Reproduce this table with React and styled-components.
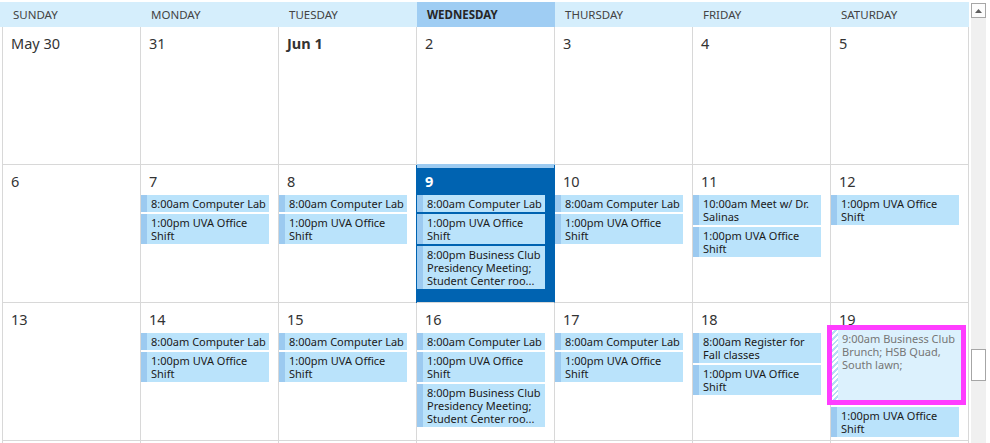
import React from "react";
import styled, { createGlobalStyle } from "styled-components";

const GlobalStyle = createGlobalStyle`
  html, body {
    margin: 0;
    padding: 0;
    background: #fff;
  }
  body {
    font-family: "Noto Sans", "Open Sans", sans-serif;
    color: #333;
  }
`;

const Page = styled.div`
  width: 990px;
  height: 443px;
  overflow: hidden;
  display: flex;
  padding-top: 2px;
  box-sizing: border-box;
`;

const Pane = styled.div`
  width: 969px;
  flex-shrink: 0;
`;

const HeaderBar = styled.div`
  display: grid;
  grid-template-columns: repeat(7, 138px);
  height: 25px;
  padding-left: 3px;
  background: #d5eefc;
`;

const HeaderCell = styled.div`
  display: flex;
  align-items: center;
  padding-left: 10px;
  font-size: 11.5px;
  text-transform: uppercase;
  color: ${(p) => (p.$today ? "#262626" : "#444")};
  font-weight: ${(p) => (p.$today ? 700 : 400)};
  background: ${(p) => (p.$today ? "#9fcdf3" : "transparent")};
`;

const Grid = styled.div`
  margin-left: 2px;
  border-left: 1px solid #d8d8d8;
  display: grid;
  grid-template-columns: repeat(7, 138px);
  grid-auto-rows: 138px;
`;

const Cell = styled.div`
  box-sizing: border-box;
  min-width: 0;
  display: flex;
  flex-direction: column;
  border-right: 1px solid ${(p) => (p.$today ? "#0063b1" : "#d8d8d8")};
  border-bottom: 1px solid #d8d8d8;
  background: ${(p) => (p.$today ? "#0063b1" : "#fff")};
  box-shadow: ${(p) =>
    p.$today
      ? "-1px 0 0 #0063b1, 0 -1px 0 #9dcbf1, inset 0 3px 0 #9dcbf1"
      : "none"};
`;

const DayNum = styled.div`
  flex-shrink: 0;
  height: 30px;
  box-sizing: border-box;
  padding: 2px 0 0 8px;
  line-height: 28px;
  font-size: 14.5px;
  color: ${(p) => (p.$today ? "#fff" : "#333")};
  font-weight: ${(p) => (p.$bold ? 700 : 400)};
`;

const EventList = styled.div`
  display: flex;
  flex-direction: column;
  gap: 2px;
`;

const Event = styled.div`
  margin-right: 9px;
  background: #bae3fb;
  border-left: 6px solid #9ccaf0;
  padding: 2px 2px 2px 4px;
  font-size: 11px;
  line-height: 13px;
  color: #1a1a1a;
`;

const Selected = styled.div`
  margin: -8px 2px 0 -4px;
  border: 5px solid #ff3dff;
  height: 70px;
  display: flex;
  background: #dcf1fd;
`;

const Hatch = styled.div`
  width: 6px;
  flex-shrink: 0;
  background: repeating-linear-gradient(
    135deg,
    #ffffff 0 2px,
    #b5dcf5 2px 4px
  );
`;

const SelectedText = styled.div`
  padding: 2px 2px 2px 4px;
  font-size: 11px;
  line-height: 13px;
  color: #767676;
`;

const ScrollTrack = styled.div`
  width: 15px;
  margin: 1px 0 0 2px;
  background: #f0f0f0;
  display: flex;
  flex-direction: column;
`;

const ScrollButton = styled.div`
  height: 15px;
  box-sizing: border-box;
  border: 1px solid #a6a6a6;
  background: #fcfcfc;
  display: flex;
  align-items: center;
  justify-content: center;
`;

const Thumb = styled.div`
  height: 32px;
  margin-top: ${(p) => p.$offset}px;
  box-sizing: border-box;
  border: 1px solid #a6a6a6;
  background: #fff;
`;

const DAYS = ["Sunday", "Monday", "Tuesday", "Wednesday", "Thursday", "Friday", "Saturday"];

const LAB = "8:00am Computer Lab";
const SHIFT = "1:00pm UVA Office Shift";
const CLUB = "8:00pm Business Club Presidency Meeting; Student Center roo...";

const WEEKS = [
  [
    { label: "May 30" },
    { label: "31" },
    { label: "Jun 1", bold: true },
    { label: "2" },
    { label: "3" },
    { label: "4" },
    { label: "5" },
  ],
  [
    { label: "6" },
    { label: "7", events: [LAB, SHIFT] },
    { label: "8", events: [LAB, SHIFT] },
    { label: "9", bold: true, today: true, events: [LAB, SHIFT, CLUB] },
    { label: "10", events: [LAB, SHIFT] },
    { label: "11", events: ["10:00am Meet w/ Dr. Salinas", SHIFT] },
    { label: "12", events: [SHIFT] },
  ],
  [
    { label: "13" },
    { label: "14", events: [LAB, SHIFT] },
    { label: "15", events: [LAB, SHIFT] },
    { label: "16", events: [LAB, SHIFT, CLUB] },
    { label: "17", events: [LAB, SHIFT] },
    { label: "18", events: ["8:00am Register for Fall classes", SHIFT] },
    {
      label: "19",
      selected: "9:00am Business Club Brunch; HSB Quad, South lawn;",
      events: [SHIFT],
    },
  ],
  // next week, only its top border shows at the bottom edge
  [{}, {}, {}, {}, {}, {}, {}],
];

function DayCell({ day }) {
  return (
    <Cell $today={day.today}>
      {day.label && (
        <DayNum $today={day.today} $bold={day.bold}>
          {day.label}
        </DayNum>
      )}
      <EventList>
        {day.selected && (
          <Selected>
            <Hatch />
            <SelectedText>{day.selected}</SelectedText>
          </Selected>
        )}
        {(day.events || []).map((ev, i) => (
          <Event key={i}>{ev}</Event>
        ))}
      </EventList>
    </Cell>
  );
}

export default function App() {
  return (
    <>
      <GlobalStyle />
      <Page>
        <Pane>
          <HeaderBar>
            {DAYS.map((d) => (
              <HeaderCell key={d} $today={d === "Wednesday"}>
                {d}
              </HeaderCell>
            ))}
          </HeaderBar>
          <Grid>
            {WEEKS.flat().map((day, i) => (
              <DayCell key={i} day={day} />
            ))}
          </Grid>
        </Pane>
        <ScrollTrack>
          <ScrollButton>
            <svg width="7" height="4" viewBox="0 0 7 4">
              <polygon points="0,4 3.5,0 7,4" fill="#5f5f5f" />
            </svg>
          </ScrollButton>
          <Thumb $offset={331} />
        </ScrollTrack>
      </Page>
    </>
  );
}
